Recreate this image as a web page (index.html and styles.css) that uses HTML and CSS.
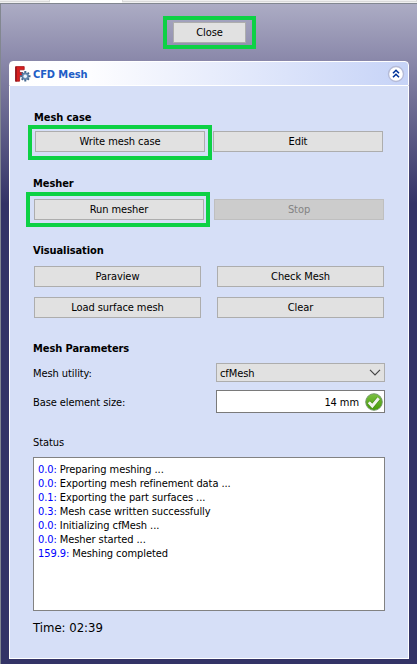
FILE: index.html
```html
<!DOCTYPE html>
<html lang="en">
<head>
<meta charset="utf-8">
<title>CFD Mesh</title>
<link rel="stylesheet" href="styles.css">
</head>
<body>
<div class="tabs"><span class="tab tab-first"></span><span class="tab tab-active"></span><span class="tab tab-rest"></span></div>
<main class="dock">
  <div class="toolbar"><div class="marked marked-close"><button class="btn">Close</button></div></div>
  <section class="panel">
    <header class="head">
      <svg class="logo" width="17" height="18" viewBox="0 0 17 18">
        <path d="M.6 1.6h8.6v3.2H4.6v2.8h3.2v3H4.6v5.6H.6z" fill="#d81e1e" stroke="#a31519" stroke-width=".8"/>
        <path d="M.4 2h1.2v14.4H.4z" fill="#84151b"/>
        <g stroke="#42658f" stroke-width="2"><path d="M10.3 6v10.4M5.1 11.2h10.4M6.7 7.6l7.2 7.2M13.9 7.6l-7.2 7.2"/></g>
        <circle cx="10.3" cy="11.2" r="3.2" fill="#7398bf" stroke="#56799f"/>
        <circle cx="10.3" cy="11.2" r="1.7" fill="#edf3fb"/>
      </svg>
      <h1 class="name">CFD Mesh</h1>
      <svg class="fold" width="18" height="18" viewBox="0 0 18 18">
        <circle cx="9" cy="9" r="7.5" fill="#fff" stroke="#b5bbd8" stroke-width="1.4"/>
        <path d="M6 8.3l3-3 3 3M6 12.3l3-3 3 3" fill="none" stroke="#003399" stroke-width="1.6"/>
      </svg>
    </header>
    <div class="body">
      <h2 class="title title-case">Mesh case</h2>
      <div class="row row-case">
        <div class="marked marked-write"><button class="btn">Write mesh case</button></div>
        <button class="btn">Edit</button>
      </div>
      <h2 class="title title-mesher">Mesher</h2>
      <div class="row row-mesher">
        <div class="marked marked-run"><button class="btn">Run mesher</button></div>
        <button class="btn" disabled>Stop</button>
      </div>
      <h2 class="title title-vis">Visualisation</h2>
      <div class="vis">
        <button class="btn">Paraview</button><button class="btn">Check Mesh</button>
        <button class="btn">Load surface mesh</button><button class="btn">Clear</button>
      </div>
      <h2 class="title title-params">Mesh Parameters</h2>
      <div class="field field-utility"><span class="label label-utility">Mesh utility:</span>
        <div class="combo"><span class="value">cfMesh</span>
          <svg width="12" height="7" viewBox="0 0 12 7"><path d="M1 .8l5 5 5-5" fill="none" stroke="#444" stroke-width="1.2"/></svg>
        </div>
      </div>
      <div class="field field-size"><span class="label label-size">Base element size:</span>
        <div class="input"><span>14 mm</span>
          <svg width="18" height="18" viewBox="0 0 18 18">
            <defs><linearGradient id="ok" x1="0" y1="0" x2="0" y2="1"><stop offset="0" stop-color="#7cc142"/><stop offset="1" stop-color="#459b06"/></linearGradient></defs>
            <circle cx="9" cy="9" r="8.3" fill="url(#ok)" stroke="#71926a" stroke-width=".9"/>
            <path d="M3.8 9.2l3.5 3.7 6.4-7.6" fill="none" stroke="#478d16" stroke-width="4.3"/>
            <path d="M3.8 9.2l3.5 3.7 6.4-7.6" fill="none" stroke="#f1f4ec" stroke-width="3"/>
          </svg>
        </div>
      </div>
      <div class="status">Status</div>
      <div class="log">
        <div><b>0.0:</b> Preparing meshing ...</div>
        <div><b>0.0:</b> Exporting mesh refinement data ...</div>
        <div><b>0.1:</b> Exporting the part surfaces ...</div>
        <div><b>0.3:</b> Mesh case written successfully</div>
        <div><b>0.0:</b> Initializing cfMesh ...</div>
        <div><b>0.0:</b> Mesher started ...</div>
        <div><b>159.9:</b> Meshing completed</div>
      </div>
      <div class="time">Time: 02:39</div>
    </div>
  </section>
</main>
</body>
</html>
```
FILE: styles.css
```css
* { box-sizing: border-box; }
body {
  margin: 0;
  width: 417px;
  height: 664px;
  overflow: hidden;
  background: #f0f0f0;
  color: #000;
  font: 11px/14px "DejaVu Sans Condensed", "DejaVu Sans", sans-serif;
  font-stretch: condensed;
  letter-spacing: -0.08px;
  white-space: nowrap;
}
h1, h2 { margin: 0; font-size: 11px; line-height: 14px; }
svg { display: block; flex: none; }

.tabs { display: flex; height: 3px; background: #f0f0f0; }
.tab { height: 2px; border: solid #d9d9d9; border-width: 0 1px 1px 0; }
.tab-first { width: 50px; }
.tab-active { width: 72px; height: 3px; background: #fff; border: 0; }
.tab-rest { flex: 1; border-left-width: 1px; }

.dock {
  height: 661px;
  padding: 0 8px;
  border: solid #828790;
  border-width: 1px 0 0 1px;
  background: linear-gradient(#acacc4 0, #8a88aa 56px, #716f96 96px, #333366 200px);
}
.toolbar { height: 57px; padding: 18px 0 0 164px; }

.btn {
  display: block;
  width: 100%;
  height: 21px;
  padding: 1px 0 0;
  border: 1px solid #adadad;
  border-radius: 0;
  background: #e1e1e1;
  color: #000;
  font: inherit;
  letter-spacing: inherit;
  text-align: center;
}
.btn:disabled { background: #ccc; border-color: #bfbfbf; color: #838383; }

.marked { position: relative; }
.marked::after { content: ""; position: absolute; border: 4px solid #0dd145; }
.marked-close { width: 73px; }
.marked-close::after { inset: -6px -10px -6px -10px; }
.marked-write::after { inset: -6px -7px -8px -7px; }
.marked-run::after { inset: -7px -6px -7px -8px; }

.panel { width: 400px; height: 598px; }
.head {
  display: flex;
  align-items: center;
  height: 25px;
  padding: 0 3px 0 5px;
  border: 1px solid #fff;
  border-radius: 4px 4px 0 0;
  background: linear-gradient(90deg, #fff 0, #fdfdff 80px, #c6d3f7 100%);
}
.logo { margin-right: 1px; }
.name { flex: 1; padding-top: 2px; color: #215dc6; font-weight: bold; }
.body {
  height: 573px;
  padding: 25px 23px 0;
  border: 1px solid #fff;
  border-top: 0;
  background: #d6dff7;
}

.title-case { padding-left: 1px; }
.row { display: grid; grid-template-columns: 170px 170px; }
.row-case { margin: 6px 0 25px 2px; column-gap: 8px; }
.row-mesher { margin: 8px 0 24px 1px; column-gap: 10px; }
.vis { display: grid; grid-template-columns: 167px 167px; gap: 10px 16px; margin: 8px 0 24px 1px; }

.field { display: flex; align-items: center; }
.label { width: 183px; padding-top: 2px; }
.field-utility { height: 19px; margin-top: 7px; }
.field-size { height: 23px; margin-top: 8px; }
.combo, .input { display: flex; align-items: center; width: 169px; height: 100%; }
.combo { justify-content: space-between; padding: 0 3px; border: 1px solid #adadad; background: #e1e1e1; }
.value, .input span { padding-top: 2px; }
.input { justify-content: flex-end; gap: 6px; padding-right: 1px; border: 1px solid #7a7a7a; background: #fff; }

.status { margin-top: 23px; }
.log { width: 352px; height: 154px; margin-top: 7px; padding: 5px 4px; border: 1px solid #828282; background: #fff; }
.log b { color: #0000ff; font-weight: normal; }
.time { margin-top: 10px; font-size: 13px; letter-spacing: 0; }
```
